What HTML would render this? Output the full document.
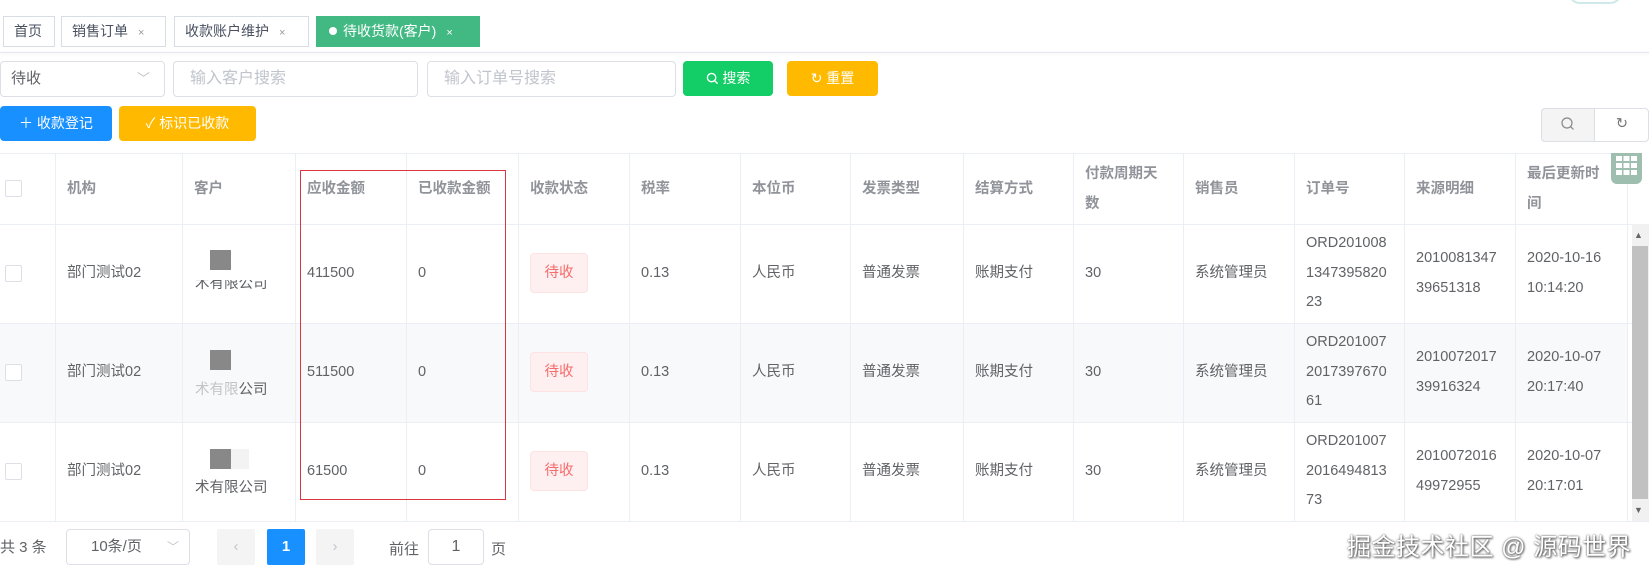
<!DOCTYPE html>
<html><head><meta charset="utf-8"><style>
*{box-sizing:border-box;margin:0;padding:0}
body{width:1649px;height:572px;overflow:hidden;background:#fff;font-family:"Liberation Sans","Noto Sans CJK SC",sans-serif;font-size:14.5px;color:#606266;position:relative}
.a{position:absolute}
.tab{position:absolute;top:16px;height:31px;border:1px solid #d8dce5;line-height:29px;font-size:14px;color:#495060;padding-left:10px;background:#fff}
.tab i{font-style:normal;font-size:11px;color:#999;margin-left:10px}
.inp{position:absolute;top:61px;height:36px;border:1px solid #dcdfe6;border-radius:4px;line-height:34px;padding-left:16px;color:#c0c4cc;font-size:16px}
.btn{position:absolute;border-radius:4px;color:#fff;font-size:14px;text-align:center}
.vl{position:absolute;top:154px;height:367px;width:1px;background:#ebeef5}
.hl{position:absolute;left:0;width:1632px;height:1px;background:#ebeef5}
.th{position:absolute;top:154px;height:70px;color:#909399;font-weight:bold;font-size:14.5px;display:flex;align-items:center;padding-left:10px;line-height:30px}
.td{position:absolute;display:flex;align-items:center;padding-left:10px;line-height:29.5px;font-size:14.5px}
.cb{position:absolute;left:5px;width:17px;height:17px;border:1px solid #dcdfe6;border-radius:2px;background:#fff}
.tag{position:absolute;left:530px;width:58px;height:40px;background:#fef0f0;border:1px solid #fde2e2;border-radius:4px;color:#f56c6c;text-align:center;line-height:38px;font-size:14.5px}
.gs{position:absolute;left:210px;width:21px;height:20px;background:#888}
svg{vertical-align:-2px}
</style></head><body>
<div class="a" style="left:1568px;top:-20px;width:54px;height:24px;border:2px solid #cfe8e8;border-radius:12px"></div>
<div class="a" style="left:0;top:52px;width:1649px;height:1px;background:#e4e7ed;box-shadow:0 1px 3px rgba(0,0,0,.08)"></div>
<div class="tab" style="left:3px;width:52px">首页</div>
<div class="tab" style="left:61px;width:105px">销售订单<i>×</i></div>
<div class="tab" style="left:174px;width:135px">收款账户维护<i>×</i></div>
<div class="tab" style="left:316px;width:164px;background:#42b983;border-color:#42b983;color:#fff;padding-left:12px"><span style="display:inline-block;width:8px;height:8px;border-radius:50%;background:#fff;margin-right:6px;vertical-align:1px"></span>待收货款(客户)<i style="color:#fff">×</i></div>

<div class="inp" style="left:0;width:165px;color:#606266;font-size:15px;padding-left:10px">待收<span style="position:absolute;right:14px;top:0;color:#c0c4cc;font-size:13px">﹀</span></div>
<div class="inp" style="left:173px;width:245px">输入客户搜索</div>
<div class="inp" style="left:427px;width:249px">输入订单号搜索</div>
<div class="btn" style="left:683px;top:61px;width:90px;height:35px;line-height:35px;background:#13ce66"><svg width="13" height="13" viewBox="0 0 14 14"><circle cx="6" cy="6" r="4.5" fill="none" stroke="#fff" stroke-width="1.5"/><path d="M9.5 9.5L12.5 12.5" stroke="#fff" stroke-width="1.5"/></svg> 搜索</div>
<div class="btn" style="left:787px;top:61px;width:91px;height:35px;line-height:35px;background:#ffba00">↻ 重置</div>
<div class="btn" style="left:0;top:106px;width:112px;height:35px;line-height:35px;background:#1890ff">＋ 收款登记</div>
<div class="btn" style="left:119px;top:106px;width:137px;height:35px;line-height:35px;background:#ffba00">✓ 标识已收款</div>
<div class="a" style="left:1541px;top:108px;width:108px;height:34px;border:1px solid #dcdfe6;border-radius:4px;background:#fff"></div>
<div class="a" style="left:1541px;top:108px;width:54px;height:34px;border:1px solid #dcdfe6;border-radius:4px 0 0 4px;background:#f4f4f5;text-align:center;line-height:32px"><svg width="14" height="14" viewBox="0 0 14 14"><circle cx="6" cy="6" r="5" fill="none" stroke="#888" stroke-width="1.2"/><path d="M9.8 9.8L12.5 12.5" stroke="#888" stroke-width="1.2"/></svg></div>
<div class="a" style="left:1595px;top:108px;width:54px;height:34px;text-align:center;line-height:32px;color:#777">↻</div>

<div class="hl" style="top:153px"></div>
<div class="hl" style="top:224px"></div>
<div class="a" style="left:0;top:323px;width:1627px;height:99px;background:#f7f9fb"></div>
<div class="hl" style="top:323px"></div>
<div class="hl" style="top:422px"></div>
<div class="hl" style="top:521px;width:1649px"></div>
<div class="vl" style="left:55px"></div><div class="vl" style="left:182px"></div><div class="vl" style="left:295px"></div><div class="vl" style="left:406px"></div><div class="vl" style="left:518px"></div><div class="vl" style="left:629px"></div><div class="vl" style="left:740px"></div><div class="vl" style="left:850px"></div><div class="vl" style="left:963px"></div><div class="vl" style="left:1073px"></div><div class="vl" style="left:1183px"></div><div class="vl" style="left:1294px"></div><div class="vl" style="left:1404px"></div><div class="vl" style="left:1515px"></div><div class="vl" style="left:1627px"></div>

<div class="cb" style="top:180px"></div>
<div class="th" style="left:57px">机构</div>
<div class="th" style="left:184px">客户</div>
<div class="th" style="left:297px">应收金额</div>
<div class="th" style="left:408px">已收款金额</div>
<div class="th" style="left:520px">收款状态</div>
<div class="th" style="left:631px">税率</div>
<div class="th" style="left:742px">本位币</div>
<div class="th" style="left:852px">发票类型</div>
<div class="th" style="left:965px">结算方式</div>
<div class="th" style="left:1075px;width:90px">付款周期天数</div>
<div class="th" style="left:1185px">销售员</div>
<div class="th" style="left:1296px">订单号</div>
<div class="th" style="left:1406px">来源明细</div>
<div class="th" style="left:1517px;width:92px">最后更新时间</div>
<div class="a" style="left:1611px;top:153px;width:31px;height:31px;background:#9ebfb0;border-radius:0 0 6px 6px"></div>
<svg class="a" style="left:1616px;top:156px" width="21" height="19" viewBox="0 0 21 19"><g fill="#fff"><rect x="0" y="0" width="6" height="5"/><rect x="7.5" y="0" width="6" height="5"/><rect x="15" y="0" width="6" height="5"/><rect x="0" y="7" width="6" height="5"/><rect x="7.5" y="7" width="6" height="5"/><rect x="15" y="7" width="6" height="5"/><rect x="0" y="14" width="6" height="5"/><rect x="7.5" y="14" width="6" height="5"/><rect x="15" y="14" width="6" height="5"/></g></svg>
<div class="a" style="left:1632px;top:224px;width:17px;height:297px;background:#f1f1f1"></div>
<div class="a" style="left:1632px;top:246px;width:16px;height:253px;background:#c1c1c1"></div>
<div class="a" style="left:1634px;top:230px;font-size:9px;color:#666">▲</div>
<div class="a" style="left:1634px;top:505px;font-size:9px;color:#666">▼</div>

<div class="cb" style="top:265px"></div>
<div class="cb" style="top:364px"></div>
<div class="cb" style="top:463px"></div>

<div class="td" style="left:57px;top:224px;height:99px">部门测试02</div>
<div class="td" style="left:57px;top:323px;height:99px">部门测试02</div>
<div class="td" style="left:57px;top:422px;height:99px">部门测试02</div>
<div class="gs" style="top:250px"></div><div class="a" style="left:195px;top:280px;height:10px;overflow:hidden;font-size:14.5px;line-height:8px">术有限公司</div>
<div class="gs" style="top:350px"></div><div class="a" style="left:195px;top:378px;font-size:14.5px;color:#606266"><span style="opacity:.35">术有限</span>公司</div>
<div class="gs" style="top:449px"></div><div class="a" style="left:231px;top:449px;width:18px;height:20px;background:#f3f3f3"></div><div class="a" style="left:195px;top:476px">术有限公司</div>

<div class="td" style="left:297px;top:224px;height:99px">411500</div>
<div class="td" style="left:297px;top:323px;height:99px">511500</div>
<div class="td" style="left:297px;top:422px;height:99px">61500</div>
<div class="td" style="left:408px;top:224px;height:99px">0</div>
<div class="td" style="left:408px;top:323px;height:99px">0</div>
<div class="td" style="left:408px;top:422px;height:99px">0</div>
<div class="tag" style="top:253px">待收</div>
<div class="tag" style="top:352px">待收</div>
<div class="tag" style="top:451px">待收</div>

<div class="td" style="left:631px;top:224px;height:99px">0.13</div><div class="td" style="left:631px;top:323px;height:99px">0.13</div><div class="td" style="left:631px;top:422px;height:99px">0.13</div>
<div class="td" style="left:742px;top:224px;height:99px">人民币</div><div class="td" style="left:742px;top:323px;height:99px">人民币</div><div class="td" style="left:742px;top:422px;height:99px">人民币</div>
<div class="td" style="left:852px;top:224px;height:99px">普通发票</div><div class="td" style="left:852px;top:323px;height:99px">普通发票</div><div class="td" style="left:852px;top:422px;height:99px">普通发票</div>
<div class="td" style="left:965px;top:224px;height:99px">账期支付</div><div class="td" style="left:965px;top:323px;height:99px">账期支付</div><div class="td" style="left:965px;top:422px;height:99px">账期支付</div>
<div class="td" style="left:1075px;top:224px;height:99px">30</div><div class="td" style="left:1075px;top:323px;height:99px">30</div><div class="td" style="left:1075px;top:422px;height:99px">30</div>
<div class="td" style="left:1185px;top:224px;height:99px">系统管理员</div><div class="td" style="left:1185px;top:323px;height:99px">系统管理员</div><div class="td" style="left:1185px;top:422px;height:99px">系统管理员</div>
<div class="td" style="left:1296px;top:224px;height:99px">ORD201008<br>1347395820<br>23</div>
<div class="td" style="left:1296px;top:323px;height:99px">ORD201007<br>2017397670<br>61</div>
<div class="td" style="left:1296px;top:422px;height:99px">ORD201007<br>2016494813<br>73</div>
<div class="td" style="left:1406px;top:224px;height:99px">2010081347<br>39651318</div>
<div class="td" style="left:1406px;top:323px;height:99px">2010072017<br>39916324</div>
<div class="td" style="left:1406px;top:422px;height:99px">2010072016<br>49972955</div>
<div class="td" style="left:1517px;top:224px;height:99px">2020-10-16<br>10:14:20</div>
<div class="td" style="left:1517px;top:323px;height:99px">2020-10-07<br>20:17:40</div>
<div class="td" style="left:1517px;top:422px;height:99px">2020-10-07<br>20:17:01</div>

<div class="a" style="left:300px;top:170px;width:206px;height:330px;border:1px solid #d9363e"></div>

<div class="a" style="left:0;top:536px;font-size:15px">共 3 条</div>
<div class="a" style="left:66px;top:529px;width:124px;height:36px;border:1px solid #dcdfe6;border-radius:4px;line-height:34px;padding-left:24px;font-size:15px">10条/页<span style="position:absolute;right:10px;color:#c0c4cc;font-size:12px">﹀</span></div>
<div class="a" style="left:217px;top:529px;width:38px;height:36px;background:#f4f4f5;border-radius:2px;color:#c0c4cc;text-align:center;line-height:36px">‹</div>
<div class="a" style="left:267px;top:529px;width:38px;height:36px;background:#1890ff;border-radius:2px;color:#fff;text-align:center;line-height:36px;font-weight:bold;font-size:15px">1</div>
<div class="a" style="left:316px;top:529px;width:38px;height:36px;background:#f4f4f5;border-radius:2px;color:#c0c4cc;text-align:center;line-height:36px">›</div>
<div class="a" style="left:389px;top:538px;font-size:15px">前往</div>
<div class="a" style="left:428px;top:529px;width:56px;height:36px;border:1px solid #dcdfe6;border-radius:4px;text-align:center;line-height:34px;font-size:16px">1</div>
<div class="a" style="left:491px;top:538px;font-size:15px">页</div>
<div class="a" style="left:1347px;top:527px;font-size:24px;color:#fff;text-shadow:0 0 2px #555,1px 1px 2px #555;letter-spacing:0.5px">掘金技术社区 @ 源码世界</div>
</body></html>
